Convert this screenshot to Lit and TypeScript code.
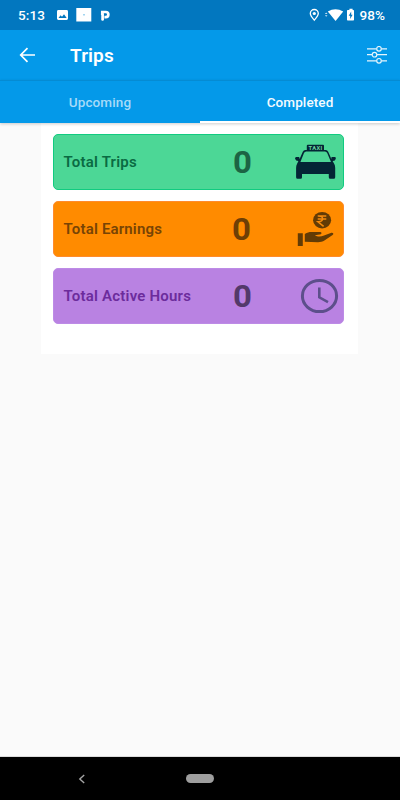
import { LitElement, html, css, svg } from "lit";
import { customElement, state } from "lit/decorators.js";
import { classMap } from "lit/directives/class-map.js";

const taxi = html`<svg class="art taxi" width="43" height="38" viewBox="0 0 43 38">
  <path fill="#042535" fill-rule="evenodd" d="M13 1.8 H29 Q30 1.8 30 2.8 V7 H31.8 Q33.3 7 34.2 8.8 L37.4 16 L37.5 14 H41 Q42 14.2 41.8 15.7 Q41.2 18.2 38.6 18 L40.3 21 Q41.2 22.5 41.2 25 V34.3 Q41.2 35.8 39.8 35.8 H36.2 Q34.8 35.8 34.8 34.3 V31 H8 V34.3 Q8 35.8 6.7 35.8 H3.5 Q2.1 35.8 2.1 34.3 V25 Q2.1 22.5 3 21 L4.4 18 Q1.5 18 1 15.5 Q1 14 2.3 14 H5.2 L5.6 16 L8.8 8.8 Q9.7 7 11.2 7 H12.8 V2.8 Q12.8 1.8 13.8 1.8 Z M12.2 8.4 Q10.7 8.4 10 10 L6.4 19 H37 L33.2 10 Q32.5 8.4 31 8.4 Z"/>
  <text class="sign" x="21.6" y="6.8" text-anchor="middle">TAXI</text>
</svg>`;

const earnings = html`<svg class="art" width="40" height="38" viewBox="0 0 40 38">
  <ellipse cx="26.1" cy="10.2" rx="9" ry="8.3" fill="#633b05"/>
  <path d="M21.7 6H30.3M21.7 8.9H30.3M22 6C28.2 5.4 28.2 12 22 11.8L27.6 16.4" fill="none" stroke="#f58a0d" stroke-width="1.5"/>
  <path fill="#633b05" d="M1.8 23.2H6.8V36H1.8ZM8.8 24C12.5 21.5 15 21.8 18.2 22.1L23.5 22C26.3 22 26 24.3 23.5 24.6L18.8 25.2C21.5 27 25 26.7 28 25.6L34.8 23C37 22.4 38.2 23.8 36.6 25L28.8 30.3C26.5 31.9 24.5 32.2 22 32.2L8.8 31.8Z"/>
</svg>`;

const clock = html`<svg class="art" width="40" height="38" viewBox="0 0 40 38">
  <ellipse cx="20.5" cy="19" rx="17.1" ry="15.6" fill="none" stroke="#5d4f8b" stroke-width="3"/>
  <path d="M20.3 10.5V20.3L29 25.1" fill="none" stroke="#5d4f8b" stroke-width="2.6"/>
</svg>`;

@customElement("stat-row")
export class StatRow extends LitElement {
  static properties = { label: {}, tone: {}, value: {}, icon: { attribute: false } };
  declare label: string;
  declare tone: string;
  declare value: string;
  declare icon: unknown;

  static styles = css`
    :host { display: block; }
    .row {
      box-sizing: border-box; height: 56px; border-radius: 5px; border: 1px solid;
      display: grid; grid-template-columns: 168px 42px 1fr; align-items: center;
      padding: 0 5px 0 9.6px;
    }
    .green { background: #4cd796; border-color: #11cb80; color: #0a6b43; }
    .orange { background: #ff8b00; border-color: #ff8b2c; color: #774405; }
    .purple { background: #b982e2; border-color: #bd8be6; color: #6c2c9c; }
    .label { font-size: 15px; font-weight: 600; letter-spacing: 0.2px; white-space: nowrap; }
    .orange .label { letter-spacing: 0.17px; }
    .value {
      font-size: 32px; line-height: 38px; font-weight: 700;
      transform: scaleX(1.03); transform-origin: left;
    }
    .green .value { color: #1c6444; padding-left: 1px; }
    .orange .value { color: #6e3f05; }
    .purple .value { color: #53396a; padding-left: 1px; }
    .icon { justify-self: end; height: 38px; }
    .green .icon { margin-right: 1.5px; }
    .orange .icon { margin-right: 2.5px; }
    .purple .icon { margin-right: -0.5px; }
    .art { display: block; }
    .sign { font: 700 5.8px Roboto, sans-serif; letter-spacing: 0.4px; fill: #6bd5a0; }
  `;

  render() {
    return html`<div class="row ${this.tone}">
      <span class="label">${this.label}</span>
      <span class="value">${this.value}</span>
      <span class="icon">${this.icon}</span>
    </div>`;
  }
}

@customElement("app-root")
export class AppRoot extends LitElement {
  @state() private tab = "Completed";

  static styles = css`
    :host {
      display: flex; flex-direction: column; width: 400px; height: 800px; overflow: hidden;
      background: #fafafa; font-family: Roboto, sans-serif; color: #fff;
    }
    svg { display: block; }
    .status {
      height: 30px; flex: none; box-sizing: border-box; background: #0277bf; display: flex;
      align-items: center; padding: 0 15px 0 18px; font-size: 13.5px; font-weight: 500;
    }
    .time { width: 38px; letter-spacing: 0.1px; }
    .percent { margin-left: 4px; letter-spacing: 0.1px; }
    .grow { flex: 1; }
    .bar {
      height: 50px; flex: none; background: #0499e9; display: flex; align-items: center;
      box-sizing: border-box; padding: 0 13px 0 19px;
    }
    .title { margin: 0 auto 0 34px; font-size: 19px; font-weight: 600; letter-spacing: 0.1px; }
    .tabs {
      height: 43px; flex: none; display: flex; background: #0499e9; box-sizing: border-box;
      border-top: 1px solid #058bd3; box-shadow: 0 1px 3px rgba(0, 0, 0, 0.2);
      position: relative; z-index: 1;
    }
    .tab {
      flex: 1; box-sizing: border-box; display: flex; align-items: center;
      justify-content: center; font-size: 13.5px; font-weight: 500; color: #a6dbf8;
      border-bottom: 2px solid transparent; padding-top: 2px; letter-spacing: 0.1px;
    }
    .active { color: #f4fbff; border-bottom-color: #fff; }
    .panel {
      box-sizing: border-box; width: 317px; height: 230.5px; margin-left: 41px; padding: 11px 14px 0 12px;
      background: #fff; display: flex; flex-direction: column; gap: 11px;
    }
    .nav {
      margin-top: auto; height: 44px; flex: none; background: #000; display: flex;
      align-items: center; box-sizing: border-box; padding: 0 0 0 77px;
      border-top: 1px solid #dcdcdc;
    }
    .nav svg { margin-right: 99px; }
    .pill { width: 28px; height: 9px; border-radius: 5px; background: #9e9e9e; }
  `;

  render() {
    return html`
      <div class="status">
        <span class="time">5:13</span>
        <svg width="60" height="16" viewBox="0 0 60 16">
          <path fill="#fff" fill-rule="evenodd" d="M2.4 3H10.6Q12 3 12 4.4V11.6Q12 13 10.6 13H2.4Q1 13 1 11.6V4.4Q1 3 2.4 3ZM2.5 11H10.7L8 7.2L6 9.8L4.6 8.2Z"/>
          <path fill="#fff" d="M20.3 1H35.3V14.5H20.3Z"/>
          <path fill="#8ccbed" d="M27.2 7H28.8V8.6H27.2Z"/>
          <path fill="none" stroke="#fff" stroke-width="2.7" stroke-linecap="round" d="M46.6 7.4V12.4"/>
          <path fill="none" stroke="#fff" stroke-width="2.7" d="M46.3 8V5H49.8A2.3 2.3 0 0 1 49.8 10.1H48.4"/>
        </svg>
        <span class="grow"></span>
        <svg width="50" height="16" viewBox="0 0 50 16">
          <path fill="none" stroke="#fff" stroke-width="1.3" d="M9.3 13.2C6.8 10.3 5.3 8.2 5.3 6.5A4 4 0 0 1 13.3 6.5C13.3 8.2 11.8 10.3 9.3 13.2Z"/>
          <circle cx="9.3" cy="6.5" r="1.6" fill="#fff"/>
          <path fill="#cbe4f3" d="M21.2 5.4L22.5 7H19.9ZM21.2 9.8L19.9 8.2H22.5Z"/>
          <path fill="#fff" d="M22.8 4.5Q30.5 -0.2 38.2 4.5L30.6 14Z"/>
          <path fill="#fff" fill-rule="evenodd" d="M43.2 3H44.4V1.8H47.6V3H48.3Q49 3 49 3.7V12.8Q49 13.5 48.3 13.5H42.7Q42 13.5 42 12.8V3.7Q42 3 42.7 3ZM46.2 4.6L43.7 8.8H45.2V12L47.6 7.8H46.2Z"/>
        </svg>
        <span class="percent">98%</span>
      </div>
      <div class="bar">
        <svg width="17" height="18" viewBox="0 0 17 18">
          <path d="M16 9H2M8.5 2.2L1.7 9L8.5 15.8" fill="none" stroke="#fff" stroke-width="1.7"/>
        </svg>
        <span class="title">Trips</span>
        <svg width="20" height="18" viewBox="0 0 20 18" fill="none" stroke="#e6f5fd" stroke-width="1.2">
          ${[[2.8, 12], [8.7, 7.5], [14.8, 12]].map(([y, x]) => svg`
            <path d="M0 ${y}H${x - 2.5}M${x + 2.5} ${y}H20"/>
            <circle cx=${x} cy=${y} r="2.3"/>`)}
        </svg>
      </div>
      <div class="tabs">
        ${["Upcoming", "Completed"].map((t) => html`
          <div class=${classMap({ tab: true, active: t === this.tab })} @click=${() => (this.tab = t)}>${t}</div>`)}
      </div>
      <div class="panel">
        <stat-row label="Total Trips" value="0" tone="green" .icon=${taxi}></stat-row>
        <stat-row label="Total Earnings" value="0" tone="orange" .icon=${earnings}></stat-row>
        <stat-row label="Total Active Hours" value="0" tone="purple" .icon=${clock}></stat-row>
      </div>
      <div class="nav">
        <svg width="10" height="12" viewBox="0 0 10 12">
          <path d="M7.2 2L2.8 6L7.2 10" fill="none" stroke="#a5a5a5" stroke-width="1.4"/>
        </svg>
        <div class="pill"></div>
      </div>`;
  }
}
